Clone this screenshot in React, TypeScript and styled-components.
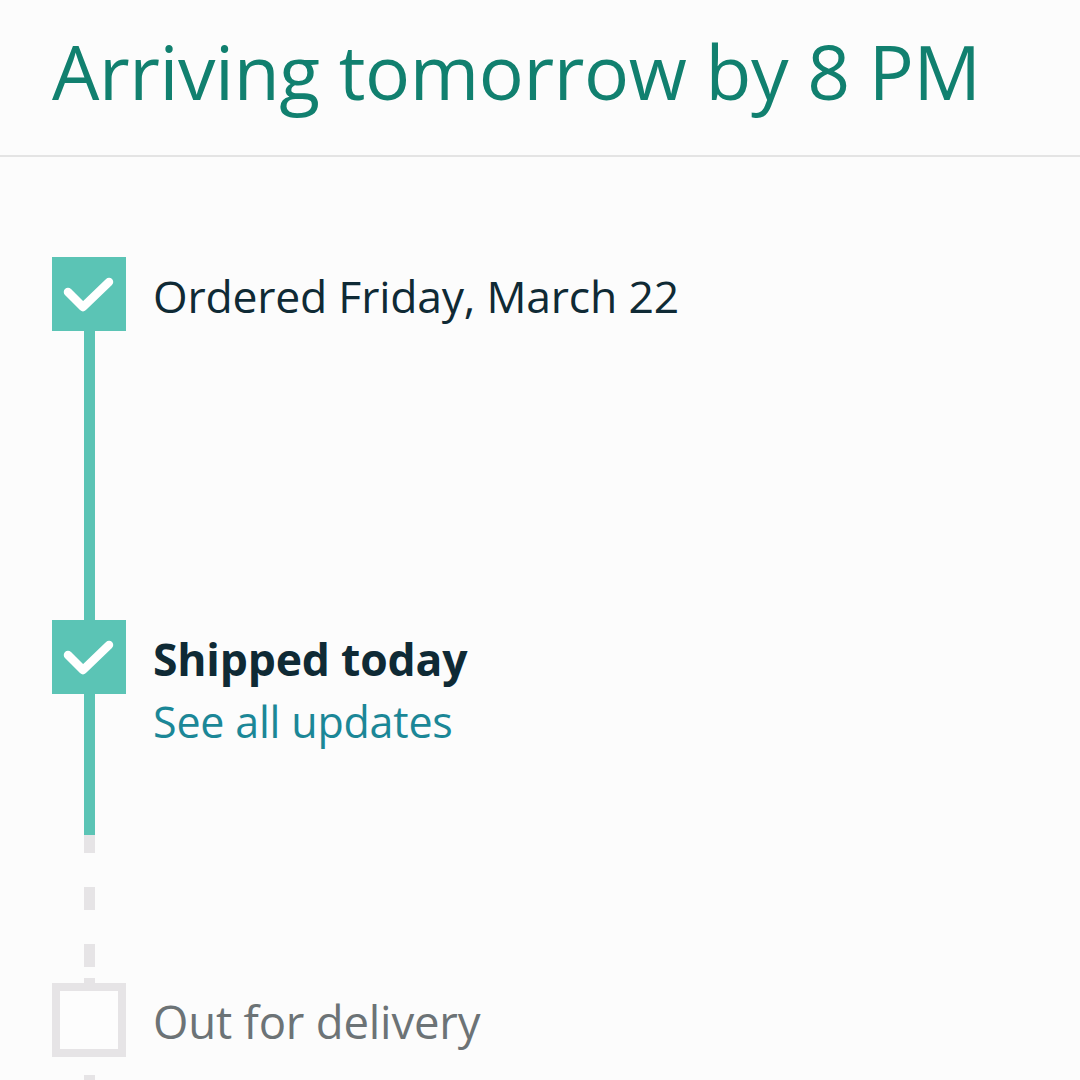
import React from "react";
import styled, { createGlobalStyle } from "styled-components";

const GlobalStyle = createGlobalStyle`
  html, body {
    margin: 0;
    padding: 0;
    background: #fcfcfc;
  }
  body {
    font-family: "Open Sans", "Noto Sans", sans-serif;
    -webkit-font-smoothing: antialiased;
  }
`;

const Page = styled.div`
  width: 1080px;
  height: 1080px;
  overflow: hidden;
  background: #fcfcfc;
`;

const Header = styled.header`
  height: 157px;
  box-sizing: border-box;
  padding: 0 0 0 52px;
  border-bottom: 2px solid #e4e4e4;
  display: flex;
  align-items: flex-start;
`;

const Heading = styled.h1`
  margin: 21px 0 0;
  font-size: 75px;
  line-height: 100px;
  font-weight: 400;
  color: #11806f;
  letter-spacing: -0.4px;
  white-space: nowrap;
`;

const Timeline = styled.div`
  padding: 100px 0 0 52px;
  display: flex;
  flex-direction: column;
`;

const Step = styled.div`
  display: flex;
  flex-direction: row;
  gap: 27px;
`;

const Indicator = styled.div`
  width: 74px;
  display: flex;
  flex-direction: column;
  align-items: center;
  flex-shrink: 0;
`;

const Box = styled.div<{ $done: boolean }>`
  width: 74px;
  height: 74px;
  box-sizing: border-box;
  background: ${(p) => (p.$done ? "#5bc4b5" : "#fdfdfd")};
  border: ${(p) => (p.$done ? "none" : "8px solid #e6e4e6")};
  display: flex;
  align-items: center;
  justify-content: center;
`;

const Solid = styled.div<{ $h: number }>`
  width: 11px;
  height: ${(p) => p.$h}px;
  background: #5bc4b5;
`;

const Dashed = styled.div<{ $h: number; $offset: number }>`
  width: 11px;
  height: ${(p) => p.$h}px;
  background-image: repeating-linear-gradient(
    to bottom,
    #e6e4e6 0px,
    #e6e4e6 23px,
    transparent 23px,
    transparent 57px
  );
  background-position: 0 ${(p) => p.$offset}px;
`;

const Content = styled.div`
  display: flex;
  flex-direction: column;
`;

const Title = styled.div<{ $bold?: boolean; $muted?: boolean }>`
  height: 74px;
  display: flex;
  align-items: center;
  padding-top: 2px;
  box-sizing: border-box;
  font-size: ${(p) => (p.$muted ? 45.5 : 44.5)}px;
  font-weight: ${(p) => (p.$bold ? 700 : 400)};
  color: ${(p) => (p.$muted ? "#6c7376" : "#0f2a35")};
  white-space: nowrap;
  letter-spacing: -0.2px;
`;

const LinkText = styled.a`
  font-size: 43px;
  line-height: 56px;
  color: #1b8797;
  text-decoration: none;
  white-space: nowrap;
  letter-spacing: -0.2px;
`;

const Check = () => (
  <svg width="74" height="74" viewBox="0 0 74 74" aria-hidden>
    <polyline
      points="16,35 31,50 57,25"
      fill="none"
      stroke="#ffffff"
      strokeWidth="8.5"
      strokeLinecap="round"
      strokeLinejoin="round"
    />
  </svg>
);

export default function App() {
  return (
    <Page>
      <GlobalStyle />
      <Header>
        <Heading>Arriving tomorrow by 8 PM</Heading>
      </Header>
      <Timeline>
        <Step>
          <Indicator>
            <Box $done>
              <Check />
            </Box>
            <Solid $h={289} />
          </Indicator>
          <Content>
            <Title>Ordered Friday, March 22</Title>
          </Content>
        </Step>
        <Step>
          <Indicator>
            <Box $done>
              <Check />
            </Box>
            <Solid $h={141} />
            <Dashed $h={148} $offset={-5} />
          </Indicator>
          <Content>
            <Title $bold>Shipped today</Title>
            <LinkText href="#">See all updates</LinkText>
          </Content>
        </Step>
        <Step>
          <Indicator>
            <Box $done={false} />
            <Dashed $h={60} $offset={-39} />
          </Indicator>
          <Content>
            <Title $muted>Out for delivery</Title>
          </Content>
        </Step>
      </Timeline>
    </Page>
  );
}
